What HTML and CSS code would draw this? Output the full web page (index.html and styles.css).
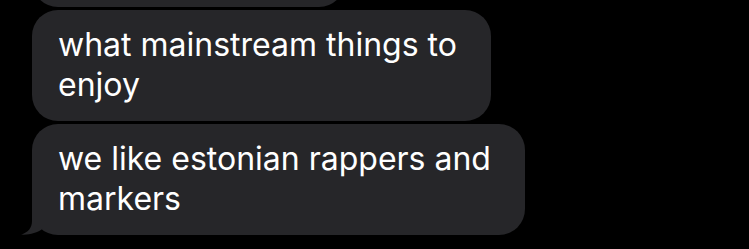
FILE: index.html
```html
<!DOCTYPE html>
<html lang="en">
<head>
<meta charset="utf-8">
<title>Messages</title>
<link rel="stylesheet" href="styles.css">
</head>
<body>
<main class="thread">
  <div class="bubble bubble-clipped" aria-hidden="true"></div>
  <div class="bubble">what mainstream things to<br>enjoy</div>
  <div class="bubble bubble-tail">we like estonian rappers and<br>markers<svg class="tail" width="30" height="35" viewBox="0 0 30 35" aria-hidden="true"><path d="M14 0 L14 21 C14 28 10 32.5 3 34.6 C11 35.2 19 33 25 28.5 L25 0 Z"/></svg></div>
</main>
</body>
</html>
```

FILE: styles.css
```css
html, body {
  margin: 0;
  padding: 0;
  background: #000;
}

body {
  width: 749px;
  height: 249px;
  overflow: hidden;
}

.thread {
  display: flex;
  flex-direction: column;
  align-items: flex-start;
  gap: 3px;
  padding-left: 32px;
}

.bubble {
  position: relative;
  background: #262629;
  color: #fff;
  font-family: Inter, "Noto Sans", sans-serif;
  font-size: 32px;
  line-height: 40px;
  padding: 15px 34px 16px 26px;
  border-radius: 26px;
  white-space: nowrap;
  -webkit-font-smoothing: antialiased;
}

.bubble-clipped {
  box-sizing: border-box;
  width: 313px;
  height: 60px;
  margin-top: -53px;
}

.tail {
  position: absolute;
  left: -14px;
  bottom: 0;
  fill: #262629;
  display: block;
}
```
